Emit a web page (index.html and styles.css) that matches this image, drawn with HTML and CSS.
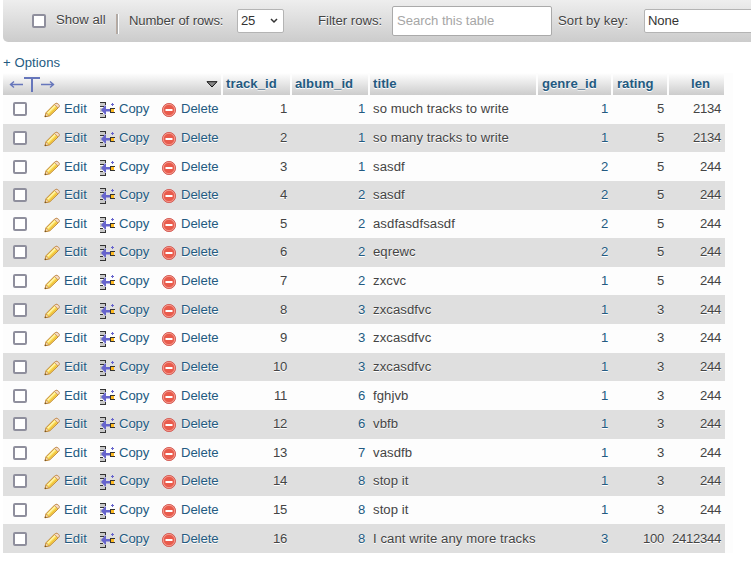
FILE: index.html
```html
<!DOCTYPE html>
<html lang="en">
<head>
<meta charset="utf-8">
<title>Tracks</title>
<link rel="stylesheet" href="styles.css">
</head>
<body>
<svg class="defs" width="0" height="0" aria-hidden="true">
  <symbol id="edit" viewBox="0 0 16 16">
    <path d="M.9 14.8 2.2 10.5 10.7 2q1.6-1.5 3.4.2t.2 3.5l-8.5 8.1Z" fill="#f9dc51" stroke="#c08430"/>
    <path d="m3.6 11.2 8-8" stroke="#fff3ac" stroke-width="1.5"/>
    <path d="m5.2 12.7 7.5-7.3" stroke="#f1bd3b"/>
    <path d="m10.5 2.4 1-.9q1.5-.7 3 .7t.5 2.9l-.9.9Z" fill="#f5dcc6" stroke="#c08b58" stroke-width=".8"/>
    <path d="m1.1 14.6 1.2-3.6 2.6 2.6Z" fill="#f9e3c0" stroke="#c08430" stroke-width=".6"/>
    <path d="m.7 15 .6-1.7 1.2 1.1Z" fill="#5c4523"/>
  </symbol>
  <symbol id="copy" viewBox="0 0 16 16">
    <path d="M0 1h5v3H0zM0 6h5v4H0zM0 12h5v3H0z" fill="#c8c8c8"/>
    <path d="M0 0h6v1H0zM5 1h1v2H5zM0 4h4v1H0zM0 11h3v1H0zM5 13h1v2H5zM0 15h6v1H0z" fill="#333"/>
    <path d="M1 8 5.2 3.4H6V7h4v2.5H6v3.1h-.8Z" fill="#6664cc"/>
    <path d="M10 6h5v1h-4v3h4v1h-5z" fill="#333"/>
    <path d="M11 7h3v3h-3z" fill="#fb2"/>
    <path d="M12 1h1v1h1v1h-1v1h-1V3h-1V2h1z" fill="#6664cc"/>
  </symbol>
  <symbol id="delete" viewBox="0 0 16 16">
    <circle cx="8" cy="8" r="6.6" fill="#e95b4c" stroke="#d4605a"/>
    <circle cx="8" cy="8" r="5.7" fill="none" stroke="#f4a094" stroke-width=".9"/>
    <path d="M4.5 7h7v2h-7z" fill="#fff"/>
  </symbol>
</svg>
<div class="toolbar">
  <span class="check"></span>
  <span class="show-all">Show all</span>
  <span class="divider"></span>
  <span class="rows-label">Number of rows:</span>
  <span class="select count">25<svg width="8" height="6" viewBox="0 0 8 6"><path d="m1 1 3 3 3-3" fill="none" stroke="#333" stroke-width="1.5"/></svg></span>
  <span class="filter-label">Filter rows:</span>
  <span class="search">Search this table</span>
  <span class="sort-label">Sort by key:</span>
  <span class="select sort">None</span>
</div>
<a class="options">+ Options</a>
<div class="results">
  <div class="head">
    <div class="tools">
      <svg width="47" height="17" viewBox="0 0 47 17" fill="none" stroke="#6676bb"><path d="M1 8.5h13M5 5.5l-3.5 3L5 11.5M32 8.5h13M41 5.5l3.5 3-3.5 3" stroke-width="1.4"/><path d="M15 2h16M23 2v14" stroke-width="2"/></svg>
      <svg width="12" height="7" viewBox="0 0 12 7"><path d="M1 .7h10L6 6Z" fill="#888" stroke="#111"/></svg>
    </div>
    <div>track_id</div><div>album_id</div><div>title</div><div class="genre">genre_id</div><div class="rating">rating</div><div class="len">len</div>
  </div>
  <div id="rows"></div>
</div>
<script src="rows.js"></script>
</body>
</html>
```
FILE: styles.css
```css
body {
  margin: 0;
  background: #fff;
  color: #444;
  font: 13.12px/16px "Liberation Sans", Arial, sans-serif;
  letter-spacing: .08px;
  overflow: hidden;
}
.defs { position: absolute; }
.toolbar {
  display: flex;
  align-items: center;
  box-sizing: border-box;
  width: 760px;
  height: 42px;
  margin-left: 3px;
  padding-left: 29px;
  border-radius: 0 0 0 5px;
  background: linear-gradient(#eee, #ccc);
  text-shadow: 0 1px 0 #fff;
  letter-spacing: -.12px;
  white-space: nowrap;
}
.toolbar > * { flex: none; box-sizing: border-box; }
.check {
  flex: none;
  box-sizing: border-box;
  width: 14px;
  height: 14px;
  border: 2px solid #8f8f9d;
  border-radius: 2px;
  background: #fff;
}
.show-all { width: 60px; margin-left: 10px; padding-bottom: 2px; letter-spacing: 0; }
.divider { width: 3px; height: 20px; margin-top: 5px; background: linear-gradient(90deg, #b9aaa0 0 1px, #aaa 1px 2px, #fff 2px); }
.rows-label { width: 109px; margin-left: 10px; }
.select {
  display: flex;
  align-items: center;
  height: 24px;
  border: 1px solid #b4b4b4;
  border-radius: 2px;
  background: #fff;
  color: #333;
  padding: 0 5px 0 3px;
  text-shadow: none;
}
.count { width: 47px; justify-content: space-between; margin-left: -1px; letter-spacing: -.3px; }
.filter-label { width: 74px; margin-left: 34px; letter-spacing: 0; }
.search {
  width: 160px;
  height: 30px;
  border: 1px solid #aaa;
  border-radius: 2px;
  background: #fff;
  color: #a6a6a6;
  padding: 6px 4px;
  text-shadow: none;
  letter-spacing: -.03px;
}
.sort-label { width: 86px; margin-left: 6px; letter-spacing: .08px; }
.sort { width: 120px; }
.options { display: block; margin: 13px 0 2px 3px; color: #235a81; }
.results { width: 730px; margin-left: 3px; background: #fdfdfd; }
.head, .row {
  display: grid;
  grid-template-columns: 218px 67px 76px 166px 73px 54px 55px;
  column-gap: 2px;
  align-items: center;
}
.head { height: 22px; color: #235a81; font-weight: bold; text-shadow: 0 1px 0 #fff; }
.head > div { height: 22px; box-sizing: border-box; padding: 3px 3px 0; background: linear-gradient(#fff, #ccc); }
.head .tools { display: flex; align-items: center; justify-content: space-between; padding: 0 3px 0 6px; }
.head .genre, .head .rating { padding-left: 4px; letter-spacing: 0; }
.head .len { padding-left: 22px; }
.row { width: 722px; height: 28.625px; text-shadow: 0 1px 0 #fff; }
.row:nth-child(even) { background: #dfdfdf; }
.actions { display: flex; align-items: center; color: #235a81; letter-spacing: -.08px; }
.actions .check { margin: 0 17px 0 10px; }
.action { display: flex; align-items: center; }
.action svg { flex: none; width: 16px; height: 16px; margin: 2px 4px 0 0; }
.edit { width: 56px; letter-spacing: .08px; }
.copy { width: 61px; }
.copy svg { margin: 2px 3px 0 0; }
.num { text-align: right; padding-right: 3px; letter-spacing: -.3px; }
.link { color: #235a81; }
.title { padding-left: 3px; white-space: nowrap; }
```
FILE: rows.js
```js
const tracks = [
  [1, 1, "so much tracks to write", 1, 5, 2134],
  [2, 1, "so many tracks to write", 1, 5, 2134],
  [3, 1, "sasdf", 2, 5, 244],
  [4, 2, "sasdf", 2, 5, 244],
  [5, 2, "asdfasdfsasdf", 2, 5, 244],
  [6, 2, "eqrewc", 2, 5, 244],
  [7, 2, "zxcvc", 1, 5, 244],
  [8, 3, "zxcasdfvc", 1, 3, 244],
  [9, 3, "zxcasdfvc", 1, 3, 244],
  [10, 3, "zxcasdfvc", 1, 3, 244],
  [11, 6, "fghjvb", 1, 3, 244],
  [12, 6, "vbfb", 1, 3, 244],
  [13, 7, "vasdfb", 1, 3, 244],
  [14, 8, "stop it", 1, 3, 244],
  [15, 8, "stop it", 1, 3, 244],
  [16, 8, "I cant write any more tracks", 3, 100, 2412344]
];
const action = (id, label) =>
  `<span class="action ${id}"><svg><use href="#${id}"/></svg>${label}</span>`;
document.getElementById("rows").innerHTML = tracks.map(([id, album, title, genre, rating, len]) =>
  `<div class="row"><div class="actions"><span class="check"></span>${action("edit", "Edit")}${action("copy", "Copy")}${action("delete", "Delete")}</div>
  <div class="num">${id}</div><div class="num link">${album}</div><div class="title">${title}</div>
  <div class="num link">${genre}</div><div class="num">${rating}</div><div class="num">${len}</div></div>`).join("");
```
